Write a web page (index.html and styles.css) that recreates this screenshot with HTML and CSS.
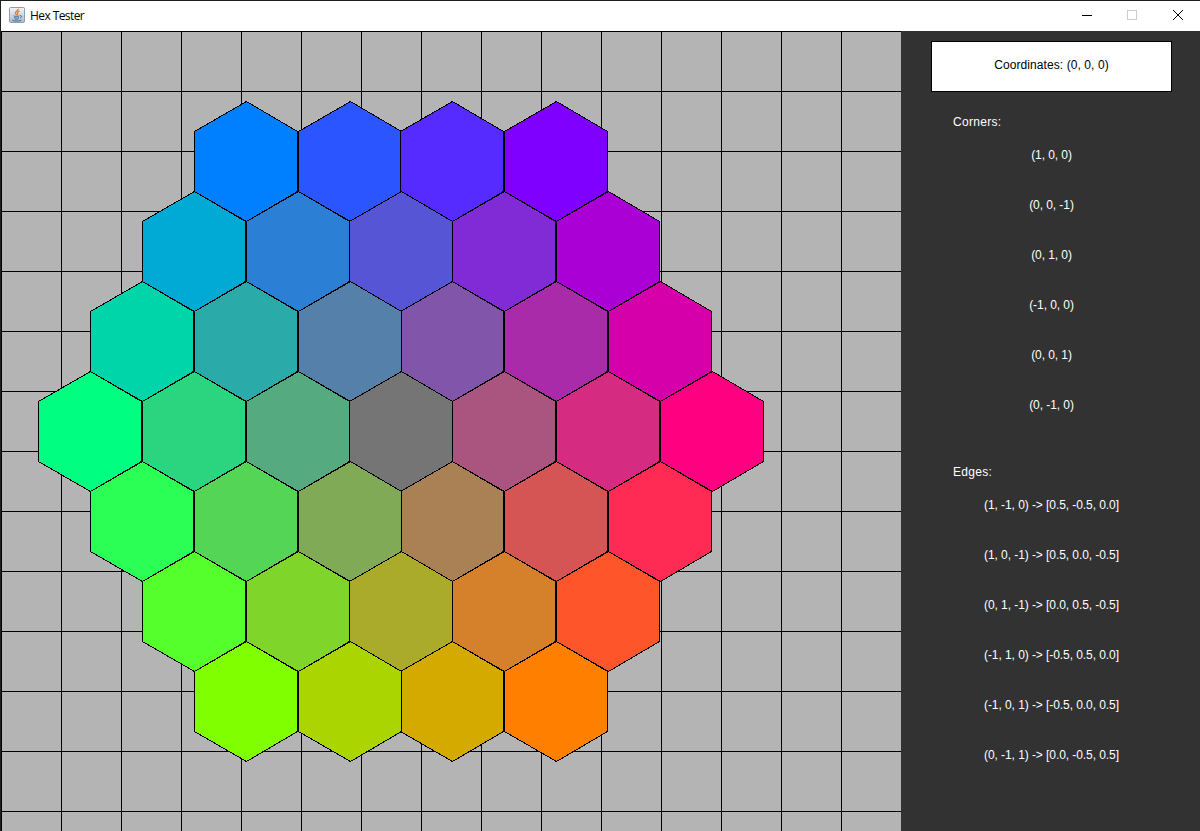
FILE: index.html
```
<!DOCTYPE html>
<html lang="en">
<head>
<meta charset="utf-8">
<title>Hex Tester</title>
<link rel="stylesheet" href="styles.css">
</head>
<body>
<div class="window">
  <header class="titlebar">
    <svg class="app-icon" viewBox="0 0 16 16" width="16" height="16">
      <defs><linearGradient id="tile" x1="0" y1="0" x2="0" y2="1"><stop offset="0" stop-color="#f4f5f6"/><stop offset=".5" stop-color="#ced8e1"/><stop offset="1" stop-color="#a9bccd"/></linearGradient></defs>
      <rect x=".5" y=".5" width="15" height="15" rx="1" fill="url(#tile)" stroke="#8d9fae"/>
      <path d="M9.200 1.800C9.800 3.600 6.200 4.200 6.400 6c.1 1 1 1.500 1.300 2.300M10.500 4.200C8.500 5 8 5.800 8.600 6.600c.3.6 0 1.200-.5 1.600" fill="none" stroke="#e87722" stroke-width="1.300"/>
      <path d="M4.500 8.800c1.200.8 4.500.7 6 .1M5 10.600c1.500.6 3.500.6 5 0M5.500 12c1.200.5 2.800.5 4 0M3 13c1.500 1.500 7 1.300 9.500.2M11 8.700c2.200-.6 2.300 1.500.1 2.400" fill="none" stroke="#38689b" stroke-width=".9"/>
    </svg>
    <h1 class="title">Hex Tester</h1>
    <svg class="controls" viewBox="0 0 120 30" width="120" height="30" shape-rendering="crispEdges">
      <path d="M2 14.500h10" stroke="#000"/>
      <rect x="47.500" y="9.500" width="9" height="9" fill="none" stroke="#ccc"/>
      <path d="M93 9l10 10M103 9l-10 10" stroke="#000" shape-rendering="auto"/>
    </svg>
  </header>
  <main class="content">
    <svg class="board" id="board" viewBox="1 31 900 800" width="900" height="800" shape-rendering="crispEdges"></svg>
    <aside class="panel">
      <div class="coordinates">Coordinates: (0, 0, 0)</div>
      <h2 class="heading">Corners:</h2>
      <ul class="list">
        <li>(1, 0, 0)</li><li>(0, 0, -1)</li><li>(0, 1, 0)</li><li>(-1, 0, 0)</li><li>(0, 0, 1)</li><li>(0, -1, 0)</li>
      </ul>
      <h2 class="heading edges-heading">Edges:</h2>
      <ul class="list">
        <li>(1, -1, 0) -&gt; [0.5, -0.5, 0.0]</li><li>(1, 0, -1) -&gt; [0.5, 0.0, -0.5]</li><li>(0, 1, -1) -&gt; [0.0, 0.5, -0.5]</li><li>(-1, 1, 0) -&gt; [-0.5, 0.5, 0.0]</li><li>(-1, 0, 1) -&gt; [-0.5, 0.0, 0.5]</li><li>(0, -1, 1) -&gt; [0.0, -0.5, 0.5]</li>
      </ul>
    </aside>
  </main>
</div>
<script src="board.js"></script>
</body>
</html>
```
FILE: styles.css
```
body {
  margin: 0;
  background: #202020;
  font-family: "Liberation Sans", Arial, sans-serif;
}
.window {
  box-sizing: border-box;
  width: 1200px;
  height: 831px;
  padding: 1px 0 0 1px;
  overflow: hidden;
}
.titlebar {
  display: flex;
  align-items: center;
  height: 30px;
  padding-left: 8px;
  background: #fff;
}
.app-icon { margin-bottom: 2px; }
.title {
  flex: 1;
  margin: 0 0 0 5px;
  font: 12px/30px "Open Sans", "Noto Sans", sans-serif;
  letter-spacing: -0.58px;
  color: #000;
}
.content { display: flex; }
.board {
  flex: none;
  background: #b4b4b4;
}
.grid-line { stroke: #000; }
.hex { stroke: #000; stroke-width: 1; }
.panel {
  flex: 1;
  height: 800px;
  padding: 10px 28px 0 30px;
  box-sizing: border-box;
  background: #323232;
  color: #fff;
  font-size: 12px;
}
.coordinates {
  box-sizing: border-box;
  height: 51px;
  border: 1px solid #000;
  background: #fff;
  color: #000;
  line-height: 47px;
  text-align: center;
  letter-spacing: 0.08px;
}
.heading {
  margin: 20px 0 0 22px;
  font-size: 12px;
  font-weight: 400;
  line-height: 20px;
  letter-spacing: 0.3px;
}
.list {
  margin: 0;
  padding: 0;
  list-style: none;
  text-align: center;
  letter-spacing: -0.07px;
}
.list li {
  height: 50px;
  line-height: 46px;
}
.edges-heading { margin-top: 30px; }
```
FILE: board.js
```
const board = document.getElementById("board");
const NS = "http://www.w3.org/2000/svg";
function add(tag, attributes) {
  const node = document.createElementNS(NS, tag);
  for (const key in attributes) node.setAttribute(key, attributes[key]);
  board.appendChild(node);
}
for (let x = 1; x < 901; x += 60) add("path", { class: "grid-line", d: `M${x + 0.5} 31V831` });
for (let y = 31; y < 831; y += 60) add("path", { class: "grid-line", d: `M1 ${y + 0.5}H901` });

const channel = v => Math.max(0, Math.min(255, Math.round(127.5 + v * 42.5)));

function drawHex(q, r) {
  const cx = 401.5 + Math.trunc((q + r / 2) * 60 * Math.sqrt(3));
  const cy = 431.5 + r * 90;
  const fill = q === 0 && r === 0 ? "#757575" : `rgb(${channel(q + r)},${channel(-q)},${channel(-r)})`;
  add("polygon", {
    class: "hex",
    fill,
    points: `${cx},${cy - 60} ${cx + 51},${cy - 30} ${cx + 51},${cy + 30} ${cx},${cy + 60} ${cx - 52},${cy + 30} ${cx - 52},${cy - 30}`
  });
}

for (let r = -3; r <= 3; r++) {
  const row = [];
  for (let q = Math.max(-3, -3 - r); q <= Math.min(3, 3 - r); q++) row.push(q);
  // The top row is painted left to right, the others right to left.
  if (r > -3) row.reverse();
  row.forEach(q => drawHex(q, r));
}
```
